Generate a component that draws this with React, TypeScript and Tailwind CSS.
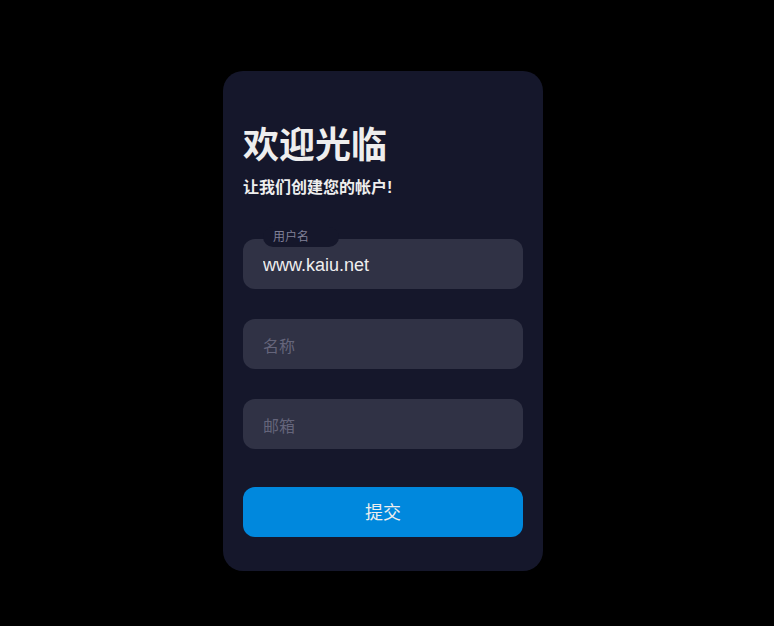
const cjk = { fontFamily: '"Liberation Sans", "Noto Sans CJK SC", sans-serif' };

function Field({ label, value }: { label: string; value?: string }) {
  return (
    <div className="relative h-[50px] w-full">
      <input
        readOnly
        value={value ?? ""}
        placeholder=" "
        className="h-full w-full rounded-[12px] border-0 bg-[#303245] px-[20px] pt-[2px] text-[18px] text-[#eeeeee] outline-none"
        style={cjk}
      />
      {value ? (
        <>
          <div className="absolute left-[20px] top-[-12px] h-[20px] w-[76px] rounded-[10px] bg-[#15172b]" />
          <div className="absolute left-[30px] top-[-8px] text-[12px] leading-[12px] text-[#808097]">{label}</div>
        </>
      ) : (
        <div className="pointer-events-none absolute left-[20px] top-[21px] text-[16px] leading-[14px] text-[#65657b]">{label}</div>
      )}
    </div>
  );
}

export default function App() {
  return (
    <div className="min-h-[626px] bg-black pl-[223px] pt-[71px]" style={cjk}>
      <div className="flex h-[500px] w-[320px] flex-col rounded-[20px] bg-[#15172b] px-[20px] pt-[20px]">
        <div className="mt-[35px] text-[36px] font-bold leading-[40px] text-[#eeeeee]">欢迎光临</div>
        <div className="mt-[12px] text-[16px] font-bold leading-[20px] text-[#eeeeee]">让我们创建您的帐户!</div>
        <div className="mt-[41px]">
          <Field label="用户名" value="www.kaiu.net" />
        </div>
        <div className="mt-[30px]">
          <Field label="名称" />
        </div>
        <div className="mt-[30px]">
          <Field label="邮箱" />
        </div>
        <button className="mt-[38px] h-[50px] w-full rounded-[12px] bg-[#0088dd] pt-[2px] text-center text-[18px] text-[#eeeeee]">
          提交
        </button>
      </div>
    </div>
  );
}
